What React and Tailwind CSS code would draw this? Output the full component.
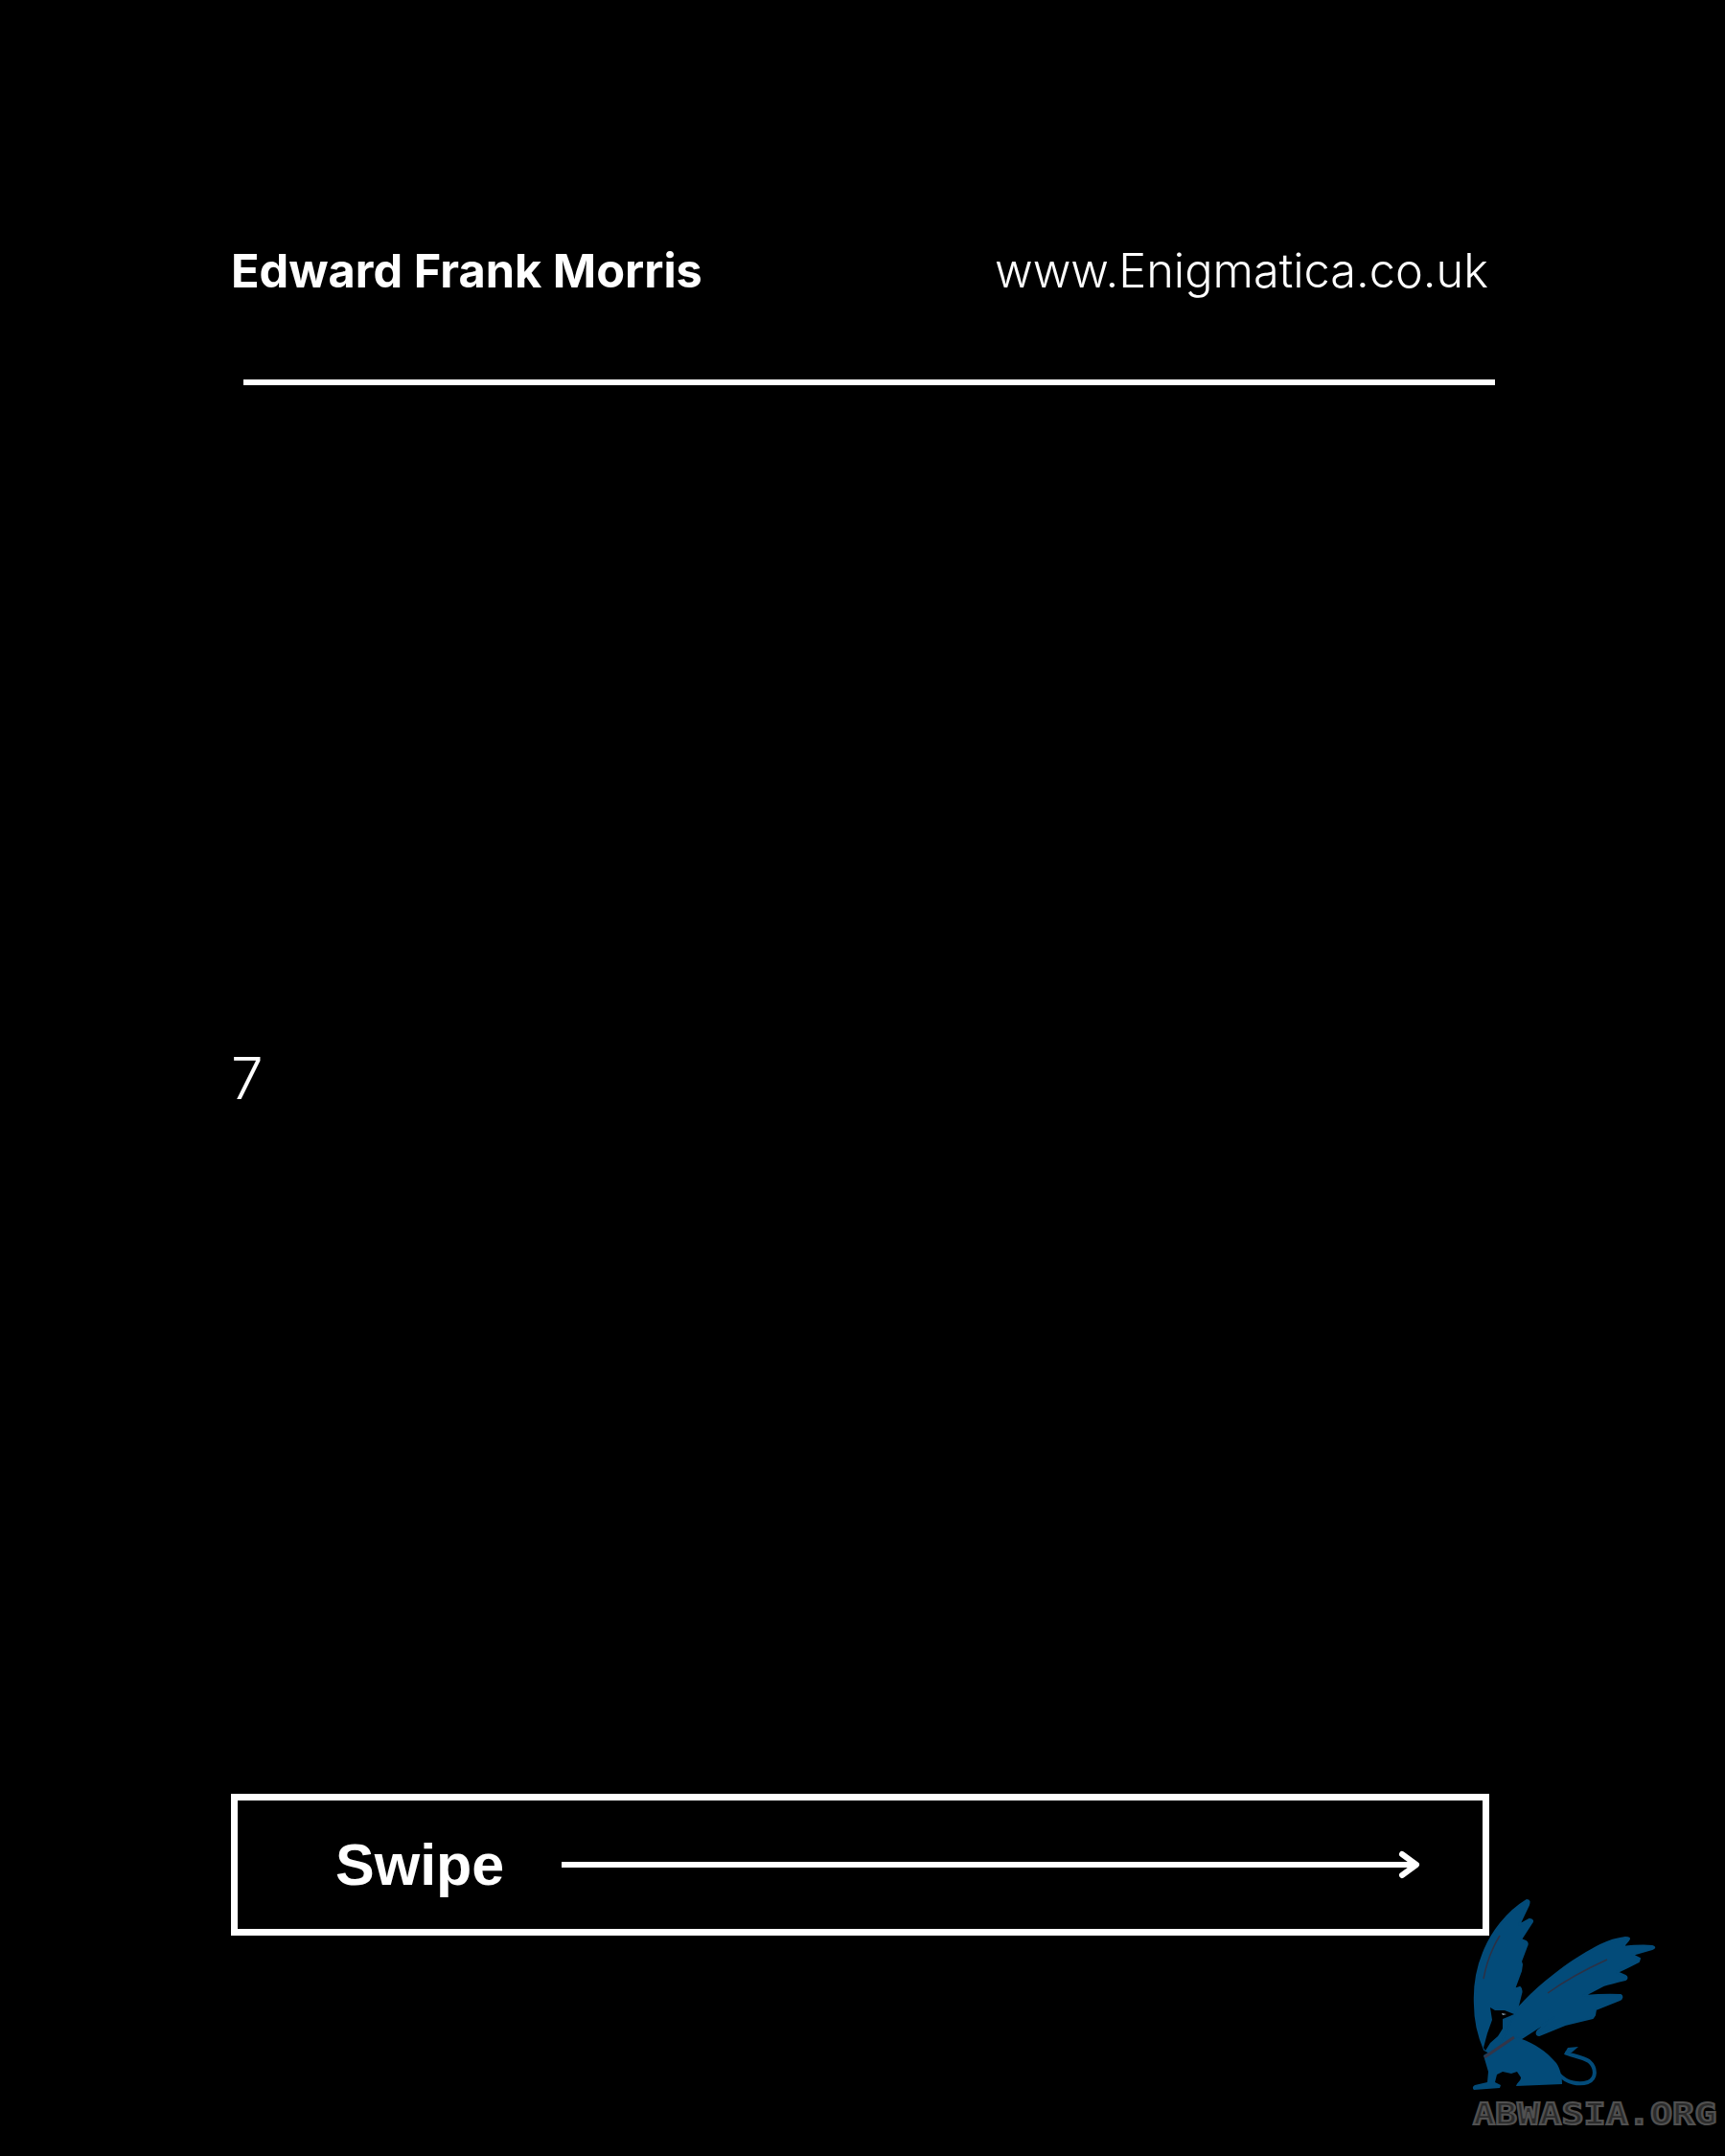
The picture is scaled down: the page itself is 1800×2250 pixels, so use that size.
import React from "react";

function Griffin() {
  return (
    <svg viewBox="0 0 200 215" className="h-[215px] w-[200px]" fill="#034b79">
      <g stroke="#034b79" strokeWidth="2" strokeLinejoin="round">
        {/* sayap kiri */}
        <path d="M63 8C66 8 66 10 65 13L55 34L66 28C69 28 70 30 68 32L57 49L62 51C64 52 64 54 63 56L57 72L58 75L57 82L50 101L56 99C58 101 58 103 57 106L53 122L30 170L19 164C13 150 9 135 9 118C8 100 11 80 18 63C26 42 43 20 63 8Z" />
        {/* sayap kanan */}
        <path d="M53 122C62 112 72 102 83 93C94 84 105 75 117 68C125 63 132 59 140 55C148 51 158 48 166 47C170 47 171 48 169 50L163 57C172 56 184 55 194 56C197 57 197 58 194 59L173 65L181 69L180 72C172 76 165 80 157 83L166 87C168 88 168 90 166 91C158 93 150 95 143 97L122 108C134 107 148 106 161 107C163 108 163 111 160 112L135 122L134 128L132 131L103 138L76 149C73 149 73 146 75 144L92 130L58 152L30 170Z" />
      </g>
      {/* badan */}
      <path d="M18 170L50 150L58 153C70 157 84 166 94 178C98 184 100 192 100 200L52 202C53 198 57 197 57 193L53 187L47 189L38 187L32 190L30 198L36 201L35 204L8 206C6 204 7 202 9 201L22 198L23 187Z" />
      <path d="M97 190C105 199 118 201 127 198C136 194 136 183 128 176C120 171 108 170 103 167" fill="none" stroke="#034b79" strokeWidth="4" />
      <path d="M103 167L106 162L117 161L110 167Z" />
      {/* kepala */}
      <path d="M18 162L22 147L27 133L25 120L30 123L40 123L50 127L43 130L38 132L38 142L33 150L25 157L20 165Z" fill="#000" />
      <path d="M37 126L42 127L38 128Z" fill="#8fa9bb" />
      {/* garis */}
      <path d="M35 45C27 58 21 74 18 90M147 70C125 80 103 92 85 105" fill="none" stroke="#2c3145" strokeWidth="1.5" />
      <path d="M19 172L50 151" fill="none" stroke="#333548" strokeWidth="3" />
    </svg>
  );
}

export default function App() {
  return (
    <div className="relative flex h-[2250px] w-[1800px] flex-col overflow-hidden bg-black pl-[241px] pt-[259px] text-white">
      {/* Header */}
      <div className="flex w-[1312px] items-baseline justify-between font-['Inter',sans-serif] text-[48.7px] leading-[48px]">
        <span className="font-bold">Edward Frank Morris</span>
        <span className="font-light">www.Enigmatica.co.uk</span>
      </div>
      <div className="ml-[13px] mt-[89px] h-[6px] w-[1306px] bg-white" />

      <div className="mt-[693px] font-['Inter',sans-serif] text-[60px] font-light leading-none">7</div>

      {/* Swipe */}
      <div className="mt-[717px] flex h-[148px] w-[1313px] items-center border-[7px] border-white pl-[102px]">
        <span className="font-['Liberation_Sans',sans-serif] text-[61px] font-bold leading-none">Swipe</span>
        <svg viewBox="0 0 900 30" className="ml-[60px] h-[30px] w-[900px]" fill="none" stroke="#fff" strokeWidth="6">
          <path d="M0 15H890" />
          <path d="M877 4L892 15L877 26" strokeLinecap="round" strokeLinejoin="round" />
        </svg>
      </div>

      {/* Logo watermark */}
      <div className="absolute left-[1530px] top-[1975px]">
        <Griffin />
      </div>
      <div className="absolute left-[1537px] top-[2189px] origin-left scale-x-[1.2] font-['DejaVu_Sans_Mono',monospace] text-[32px] font-bold leading-[34px] text-[#2a2a2a] [-webkit-text-stroke:2px_#505050]">
        ABWASIA.ORG
      </div>
    </div>
  );
}
